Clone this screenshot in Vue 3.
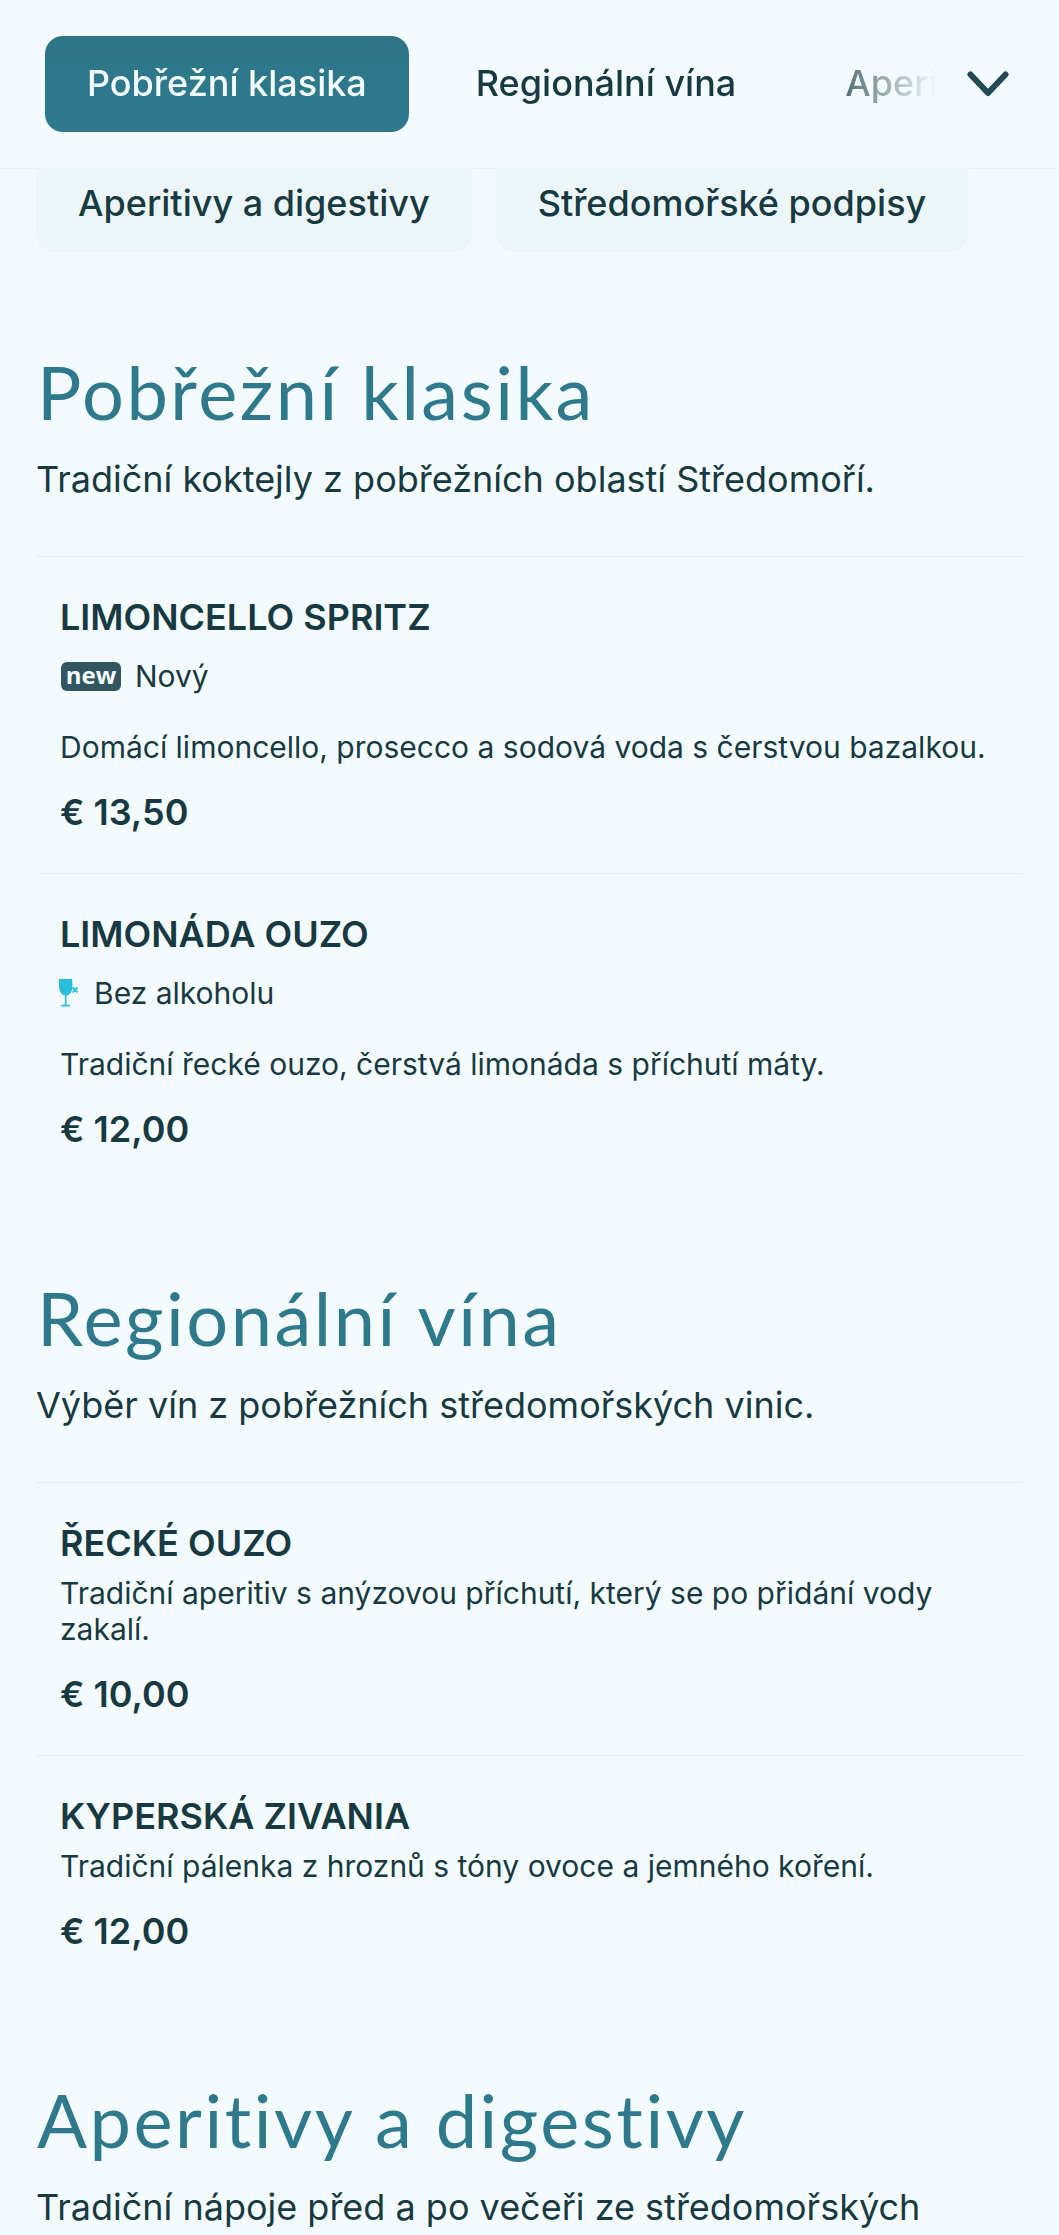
<template>
    <div class="page">
        <header class="topbar">
            <nav class="tabs">
                <a v-for="(tab, index) in tabs" :key="tab" class="tab" :class="{ active: index === 0 }">{{ tab }}</a>
            </nav>
            <svg class="chevron" viewBox="0 0 42 26" width="42" height="26" fill="none">
                <path d="M3.500 3.500 21 22 38.500 3.500" stroke="#234a54" stroke-width="6" stroke-linecap="round" stroke-linejoin="round" />
            </svg>
        </header>

        <div class="pills">
            <a v-for="pill in pills" :key="pill" class="pill">{{ pill }}</a>
        </div>

        <section v-for="section in sections" :key="section.title" class="menu-section">
            <h2 class="section-title">{{ section.title }}</h2>
            <p class="section-sub">{{ section.sub }}</p>
            <div class="items" v-if="section.items.length">
                <article v-for="item in section.items" :key="item.name" class="item">
                    <h3 class="item-name">{{ item.name }}</h3>
                    <!-- stitek nad popisem -->
                    <div v-if="item.tag === 'new'" class="item-tag">
                        <span class="badge">new</span>
                        <span>Nový</span>
                    </div>
                    <div v-if="item.tag === 'noalc'" class="item-tag">
                        <svg class="glass" viewBox="0 0 24 28" width="24" height="28">
                            <path d="M0 0h13l.5 7c.2 5.500-2.500 9.500-6.500 9.500S-.2 12.500 0 7z" fill="#2bbcdc" />
                            <path d="M5.800 16h1.700v10H5.800z" fill="#2bbcdc" />
                            <path d="M2 25.800h9v1.700H2z" fill="#2bbcdc" />
                            <path d="M13.500 8.500l5 5m0-5-5 5" stroke="#2bbcdc" stroke-width="1.800" fill="none" />
                        </svg>
                        <span>Bez alkoholu</span>
                    </div>
                    <p class="item-desc" :class="{ tight: !item.tag }">{{ item.desc }}</p>
                    <div class="item-price">{{ item.price }}</div>
                </article>
            </div>
        </section>
    </div>
</template>
<script setup>
const tabs = ['Pobřežní klasika', 'Regionální vína', 'Aperitivy a digestivy']
const pills = ['Aperitivy a digestivy', 'Středomořské podpisy']

const sections = [
    {
        title: 'Pobřežní klasika',
        sub: 'Tradiční koktejly z pobřežních oblastí Středomoří.',
        items: [
            { name: 'LIMONCELLO SPRITZ', tag: 'new', desc: 'Domácí limoncello, prosecco a sodová voda s čerstvou bazalkou.', price: '€ 13,50' },
            { name: 'LIMONÁDA OUZO', tag: 'noalc', desc: 'Tradiční řecké ouzo, čerstvá limonáda s příchutí máty.', price: '€ 12,00' },
        ],
    },
    {
        title: 'Regionální vína',
        sub: 'Výběr vín z pobřežních středomořských vinic.',
        items: [
            { name: 'ŘECKÉ OUZO', desc: 'Tradiční aperitiv s anýzovou příchutí, který se po přidání vody zakalí.', price: '€ 10,00' },
            { name: 'KYPERSKÁ ZIVANIA', desc: 'Tradiční pálenka z hroznů s tóny ovoce a jemného koření.', price: '€ 12,00' },
        ],
    },
    {
        title: 'Aperitivy a digestivy',
        sub: 'Tradiční nápoje před a po večeři ze středomořských',
        items: [],
    },
]
</script>

<style>
html,
body {
    background: #f4fbfe;
}
</style>

<style scoped>
.page {
    font-family: Inter, "Liberation Sans", sans-serif;
    color: #173a42;
    background: #f4fbfe;
}

.topbar {
    display: flex;
    align-items: center;
    height: 169px;
    padding-left: 45px;
    border-bottom: 1px solid #e9f2f4;
    box-sizing: border-box;
}

.tabs {
    display: flex;
    gap: 25px;
    width: 900px;
    flex: none;
    overflow: hidden;
    /* treti zalozka se ztraci do pozadi */
    mask-image: linear-gradient(to right, #000 770px, rgba(0, 0, 0, 0.72) 800px, transparent 892px);
}

.tab {
    flex: none;
    padding: 0 42px;
    height: 96px;
    line-height: 94px;
    font-size: 36px;
    font-weight: 500;
    border-radius: 18px;
    white-space: nowrap;
}

.tab.active {
    color: #f4fbfe;
    background: linear-gradient(180deg, #2c7688, #2e7a8c);
}

.chevron {
    flex: none;
    margin-left: 22px;
}

.pills {
    display: flex;
    gap: 24px;
    padding-left: 36px;
}

.pill {
    height: 83px;
    line-height: 68px;
    padding: 0 42px;
    font-size: 36px;
    font-weight: 500;
    background: #ecf5f7;
    border-radius: 0 0 18px 18px;
    white-space: nowrap;
}

.menu-section {
    padding: 0 36px;
}

.pills + .menu-section {
    margin-top: 102px;
}

.menu-section + .menu-section {
    margin-top: 90px;
}

.section-title {
    margin: 0 0 0 1px;
    font-family: Lato, "Noto Sans", sans-serif;
    font-size: 74px;
    line-height: 76px;
    font-weight: 400;
    letter-spacing: 2.500px;
    color: #2e7a8c;
}

.section-sub {
    margin: 22px 0 0;
    font-size: 36px;
    line-height: 54px;
}

.items {
    margin-top: 50px;
}

.item {
    padding: 36px 24px 37px;
    border-top: 1px solid #e6eff2;
}

.item-name {
    margin: 0;
    font-size: 36px;
    line-height: 48px;
    font-weight: 600;
}

.item-tag {
    display: flex;
    align-items: center;
    gap: 15px;
    margin-top: 15px;
    font-size: 30px;
    line-height: 40px;
}

.badge {
    width: 60px;
    height: 29px;
    margin-left: 1px;
    margin-right: -1px;
    line-height: 25px;
    text-align: center;
    font-family: "Open Sans", sans-serif;
    font-size: 24px;
    font-weight: 700;
    color: #f4fbfe;
    background: #315660;
    border-radius: 6px;
}

.glass {
    margin-left: -1px;
    margin-right: -4px;
}

.item-desc {
    margin: 33px 0 0;
    font-size: 30px;
    line-height: 36px;
}

.item-desc.tight {
    margin-top: 8px;
}

.item-price {
    margin-top: 23px;
    font-size: 36px;
    line-height: 48px;
    font-weight: 600;
}
</style>
